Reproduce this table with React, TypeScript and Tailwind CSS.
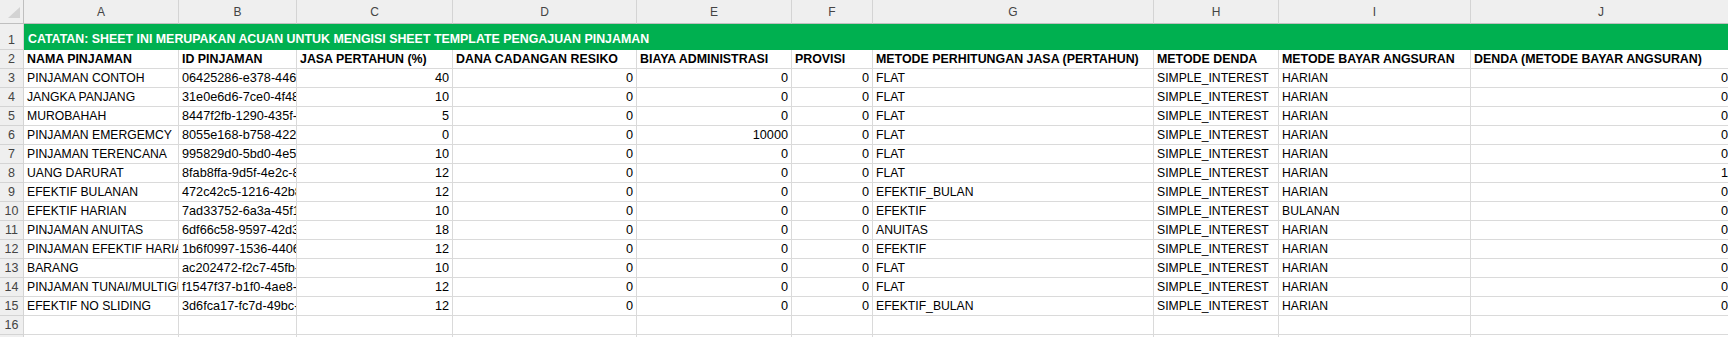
const cols = ["A", "B", "C", "D", "E", "F", "G", "H", "I", "J"];

const headers = [
  "NAMA PINJAMAN",
  "ID PINJAMAN",
  "JASA PERTAHUN (%)",
  "DANA CADANGAN RESIKO",
  "BIAYA ADMINISTRASI",
  "PROVISI",
  "METODE PERHITUNGAN JASA (PERTAHUN)",
  "METODE DENDA",
  "METODE BAYAR ANGSURAN",
  "DENDA (METODE BAYAR ANGSURAN)",
];

type Row = [string, string, number, number, number, number, string, string, string, number];

const rows: Row[] = [
  ["PINJAMAN CONTOH", "06425286-e378-4466-9a1c-2f0b7d35e811", 40, 0, 0, 0, "FLAT", "SIMPLE_INTEREST", "HARIAN", 0],
  ["JANGKA PANJANG", "31e0e6d6-7ce0-4f48-b2d1-90c4a6e3f027", 10, 0, 0, 0, "FLAT", "SIMPLE_INTEREST", "HARIAN", 0],
  ["MUROBAHAH", "8447f2fb-1290-435f-8c62-71de05ab9c44", 5, 0, 0, 0, "FLAT", "SIMPLE_INTEREST", "HARIAN", 0],
  ["PINJAMAN EMERGEMCY", "8055e168-b758-4225-a3f9-6b1e2c7d0f58", 0, 0, 10000, 0, "FLAT", "SIMPLE_INTEREST", "HARIAN", 0],
  ["PINJAMAN TERENCANA", "995829d0-5bd0-4e5a-91b7-c4f2083e6d19", 10, 0, 0, 0, "FLAT", "SIMPLE_INTEREST", "HARIAN", 0],
  ["UANG DARURAT", "8fab8ffa-9d5f-4e2c-8b40-5a7e19d3c662", 12, 0, 0, 0, "FLAT", "SIMPLE_INTEREST", "HARIAN", 1],
  ["EFEKTIF BULANAN", "472c42c5-1216-42b8-9e05-d3a1f76c2b90", 12, 0, 0, 0, "EFEKTIF_BULAN", "SIMPLE_INTEREST", "HARIAN", 0],
  ["EFEKTIF HARIAN", "7ad33752-6a3a-45f1-b8c3-0e92d4a57f16", 10, 0, 0, 0, "EFEKTIF", "SIMPLE_INTEREST", "BULANAN", 0],
  ["PINJAMAN ANUITAS", "6df66c58-9597-42d3-a6e8-1bc5f09d7a34", 18, 0, 0, 0, "ANUITAS", "SIMPLE_INTEREST", "HARIAN", 0],
  ["PINJAMAN EFEKTIF HARIAN", "1b6f0997-1536-4406-8d2a-e7c3b51f9082", 12, 0, 0, 0, "EFEKTIF", "SIMPLE_INTEREST", "HARIAN", 0],
  ["BARANG", "ac202472-f2c7-45fb-93e1-6d08a4c7b25e", 10, 0, 0, 0, "FLAT", "SIMPLE_INTEREST", "HARIAN", 0],
  ["PINJAMAN TUNAI/MULTIGUNA", "f1547f37-b1f0-4ae8-a7d4-38c9e2f1065b", 12, 0, 0, 0, "FLAT", "SIMPLE_INTEREST", "HARIAN", 0],
  ["EFEKTIF NO SLIDING", "3d6fca17-fc7d-49bc-8f25-a01e6b93d4c7", 12, 0, 0, 0, "EFEKTIF_BULAN", "SIMPLE_INTEREST", "HARIAN", 0],
];

const gridCols = "grid grid-cols-[24px_155px_118px_156px_184px_155px_81px_281px_125px_192px_261px]";

function RowNum({ n, tall }: { n: number | string; tall?: boolean }) {
  return (
    <div
      className={`${tall ? "h-[26px]" : "h-[19px]"} bg-[#efefef] border-r border-b border-[#d4d4d4] flex items-end justify-center pb-px text-[12.5px] leading-[15px] text-[#444]`}
    >
      {n}
    </div>
  );
}

function Cell({ children, right, bold, digits }: { children?: React.ReactNode; right?: boolean; bold?: boolean; digits?: boolean }) {
  return (
    <div
      className={`h-[19px] border-r border-b border-[#dadada] bg-white flex items-end pb-px px-[3px] overflow-hidden whitespace-nowrap leading-[15px] text-black ${
        right ? "justify-end" : ""
      } ${bold ? "font-bold text-[12.4px]" : digits ? "text-[12.7px]" : "text-[12.2px]"}`}
    >
      {children}
    </div>
  );
}

export default function App() {
  return (
    <div className="w-[1728px] h-[337px] overflow-hidden bg-white font-['Liberation_Sans',Arial,sans-serif]">
      {/* column letters */}
      <div className={gridCols}>
        <div className="h-[24px] bg-[#efefef] border-r border-b border-[#bfbfbf] flex items-end justify-end pr-[3px] pb-[5px]">
          <svg width="12" height="11" viewBox="0 0 12 11">
            <path d="M12 0 L12 11 L0 11 Z" fill="#d3d3d3" />
          </svg>
        </div>
        {cols.map((c) => (
          <div
            key={c}
            className="h-[24px] bg-[#efefef] border-r border-b border-r-[#d4d4d4] border-b-[#bfbfbf] flex items-center justify-center pt-px text-[12px] text-[#444]"
          >
            {c}
          </div>
        ))}

        {/* row 1: note */}
        <RowNum n={1} tall />
        <div className="col-span-10 h-[26px] bg-[#00b050] flex items-end pb-[3px] px-[4px] whitespace-nowrap text-[12.4px] leading-[15px] font-bold text-white">
          CATATAN: SHEET INI MERUPAKAN ACUAN UNTUK MENGISI SHEET TEMPLATE PENGAJUAN PINJAMAN
        </div>

        {/* row 2: headers */}
        <RowNum n={2} />
        {headers.map((h) => (
          <Cell key={h} bold>
            {h}
          </Cell>
        ))}

        {/* data */}
        {rows.map((r, i) => (
          <div key={i} className="contents">
            <RowNum n={i + 3} />
            {r.map((v, j) => (
              <Cell key={j} right={typeof v === "number"} digits={j === 1 || typeof v === "number"}>
                {v}
              </Cell>
            ))}
          </div>
        ))}

        {/* empty rows */}
        {[16, 17].map((n) => (
          <div key={n} className="contents">
            <RowNum n={n} />
            {cols.map((c) => (
              <Cell key={c} />
            ))}
          </div>
        ))}
      </div>
    </div>
  );
}
